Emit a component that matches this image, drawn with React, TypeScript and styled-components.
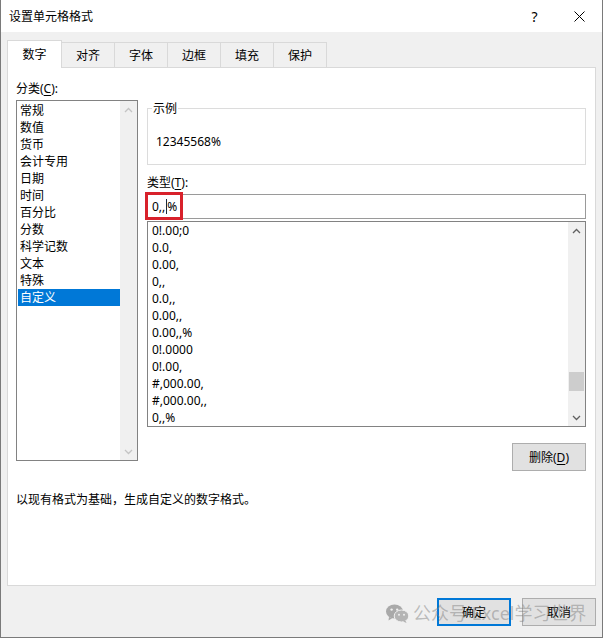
import styled, { createGlobalStyle } from "styled-components";

// 分类 / 类型 列表数据
const categories = ['常规', '数值', '货币', '会计专用', '日期', '时间', '百分比', '分数', '科学记数', '文本', '特殊', '自定义'];
const formats = ['0!.00;0', '0.0,', '0.00,', '0,,', '0.0,,', '0.00,,', '0.00,,%', '0!.0000', '0!.00,', '#,000.00,', '#,000.00,,', '0,,%'];
const tabs = ['数字', '对齐', '字体', '边框', '填充', '保护'];

const GlobalStyle = createGlobalStyle`
    html, body {
        margin: 0;
        padding: 0;
        background: #fff;
    }

    * {
        box-sizing: border-box;
    }
`;

const Chevron = ({ up, color }: { up?: boolean; color: string }) => (
    <svg width="9" height="6" viewBox="0 0 9 6">
        <polyline
            points={up ? '1,5 4.5,1.5 8,5' : '1,1 4.5,4.5 8,1'}
            fill="none"
            stroke={color}
            strokeWidth="1.3"
        />
    </svg>
);

const ScrollBar = ({ disabled, thumbTop, thumbHeight }: { disabled?: boolean; thumbTop?: number; thumbHeight?: number }) => {
    const color = disabled ? '#c4c4c4' : '#606060';
    return (
        <Bar>
            <ArrowBox><Chevron up color={color} /></ArrowBox>
            <Track>
                {thumbHeight ? <Thumb style={{ marginTop: thumbTop, height: thumbHeight }} /> : null}
            </Track>
            <ArrowBox><Chevron color={color} /></ArrowBox>
        </Bar>
    );
};

const WeChatLogo = () => (
    <svg width="23" height="19" viewBox="0 0 23 19">
        <ellipse cx="8.5" cy="7.5" rx="8.5" ry="7" fill="#a9a9a9" />
        <path d="M3 13 L2.5 16.5 L6.5 14 Z" fill="#a9a9a9" />
        <circle cx="5.6" cy="5.6" r="1.2" fill="#f0f0f0" />
        <circle cx="11.2" cy="5.6" r="1.2" fill="#f0f0f0" />
        <ellipse cx="15.5" cy="12" rx="7.3" ry="6" fill="#b4b4b4" stroke="#f0f0f0" strokeWidth="1" />
        <path d="M19.5 16.5 L20.5 19 L17 17.5 Z" fill="#b4b4b4" />
        <circle cx="13" cy="10.8" r="1" fill="#f0f0f0" />
        <circle cx="18" cy="10.8" r="1" fill="#f0f0f0" />
    </svg>
);

const App = () => {
    return (
        <>
            <GlobalStyle />
            <Window>
                <TitleBar>
                    <Title>设置单元格格式</Title>
                    <CaptionButton>?</CaptionButton>
                    <CaptionButton>
                        <svg width="11" height="11" viewBox="0 0 11 11">
                            <path d="M0.5 0.5 L10.5 10.5 M10.5 0.5 L0.5 10.5" stroke="#000" strokeWidth="1" />
                        </svg>
                    </CaptionButton>
                </TitleBar>

                <Body>
                    <TabStrip>
                        {tabs.map((t, i) => (
                            <Tab key={t} $active={i === 0}>{t}</Tab>
                        ))}
                    </TabStrip>

                    <Panel>
                        <Columns>
                            <LeftCol>
                                <FieldLabel>分类(<u>C</u>):</FieldLabel>
                                <CategoryBox>
                                    <Rows $inset={1}>
                                        {categories.map((c, i) => (
                                            <CategoryRow key={c} $selected={i === categories.length - 1}>{c}</CategoryRow>
                                        ))}
                                    </Rows>
                                    <ScrollBar disabled />
                                </CategoryBox>
                            </LeftCol>

                            <RightCol>
                                <SampleGroup>
                                    <legend>示例</legend>
                                    <SampleText>12345568%</SampleText>
                                </SampleGroup>

                                <TypeLabel>类型(<u>T</u>):</TypeLabel>
                                <InputWrap>
                                    <TypeInput>0,,<Caret />%</TypeInput>
                                    <Marker />
                                </InputWrap>

                                <FormatBox>
                                    <Rows $inset={0}>
                                        {formats.map((f) => (
                                            <FormatRow key={f}>{f}</FormatRow>
                                        ))}
                                    </Rows>
                                    <ScrollBar thumbTop={133} thumbHeight={19} />
                                </FormatBox>

                                <DeleteRow>
                                    <Button>删除(<u>D</u>)</Button>
                                </DeleteRow>
                            </RightCol>
                        </Columns>

                        <Hint>以现有格式为基础，生成自定义的数字格式。</Hint>
                    </Panel>

                    <Footer>
                        <OkButton>确定</OkButton>
                        <Button>取消</Button>
                    </Footer>
                </Body>

                <Watermark>
                    <WeChatLogo />
                    <span>公众号·Excel学习世界</span>
                </Watermark>
            </Window>
        </>
    );
};

const Window = styled.div`
    position: relative;
    width: 603px;
    height: 638px;
    display: flex;
    flex-direction: column;
    background: #f0f0f0;
    border: 1px solid #7a7a7a;
    border-top: none;
    overflow: hidden;

    font-family: "Noto Sans", "Noto Sans CJK SC", sans-serif;
    font-size: 12px;
    line-height: 17px;
    color: #000;

    u {
        text-decoration: underline;
        text-underline-offset: 2px;
    }
`;

const TitleBar = styled.div`
    flex: none;
    height: 32px;
    display: flex;
    align-items: center;
    padding-left: 8px;
    background: #fff;
`;

const Title = styled.div`
    flex: 1;
    font-size: 12px;
`;

const CaptionButton = styled.div`
    width: 45px;
    height: 32px;
    display: flex;
    align-items: center;
    justify-content: center;
    font-size: 14px;
    color: #000;
`;

const Body = styled.div`
    flex: 1;
    display: flex;
    flex-direction: column;
    padding: 8px 6px 0 6px;
`;

const TabStrip = styled.div`
    display: flex;
    align-items: flex-end;
    height: 27px;
`;

const Tab = styled.div<{ $active: boolean }>`
    position: relative;
    z-index: ${({ $active }) => ($active ? 2 : 1)};
    width: ${({ $active }) => ($active ? 55 : 54)}px;
    height: ${({ $active }) => ($active ? 28 : 25)}px;
    margin-bottom: ${({ $active }) => ($active ? -1 : 0)}px;
    margin-left: -1px;
    display: flex;
    align-items: center;
    justify-content: center;
    background: ${({ $active }) => ($active ? '#fff' : '#f0f0f0')};
    border: 1px solid #d9d9d9;
    border-bottom: none;

    &:first-child {
        margin-left: 0;
    }
`;

const Panel = styled.div`
    flex: none;
    height: 519px;
    background: #fff;
    border: 1px solid #d9d9d9;
    padding: 12px 7px 0 8px;
`;

const Columns = styled.div`
    display: grid;
    grid-template-columns: 122px 439px;
    column-gap: 9px;
    align-items: start;
`;

const LeftCol = styled.div`
    display: flex;
    flex-direction: column;
`;

const FieldLabel = styled.div`
    height: 17px;
    margin-bottom: 3px;
`;

const ListFrame = styled.div`
    display: flex;
    border: 1px solid #828282;
    background: #fff;
`;

const CategoryBox = styled(ListFrame)`
    height: 361px;
`;

const FormatBox = styled(ListFrame)`
    height: 206px;
    margin-top: 2px;
`;

const Rows = styled.div<{ $inset: number }>`
    flex: 1;
    padding: ${({ $inset }) => $inset}px 0 0 ${({ $inset }) => $inset}px;
`;

const CategoryRow = styled.div<{ $selected: boolean }>`
    height: 17px;
    padding-left: 2px;
    white-space: nowrap;
    background: ${({ $selected }) => ($selected ? '#0078d7' : 'transparent')};
    color: ${({ $selected }) => ($selected ? '#fff' : '#000')};
`;

const FormatRow = styled.div`
    height: 17px;
    padding-left: 4px;
    white-space: nowrap;
`;

const Bar = styled.div`
    width: 17px;
    display: flex;
    flex-direction: column;
    background: #f0f0f0;
`;

const ArrowBox = styled.div`
    height: 17px;
    display: flex;
    align-items: center;
    justify-content: center;
`;

const Track = styled.div`
    flex: 1;
    display: flex;
    flex-direction: column;
`;

const Thumb = styled.div`
    margin: 0 1px;
    background: #cdcdcd;
`;

const RightCol = styled.div`
    display: flex;
    flex-direction: column;
    padding-top: 20px;
`;

const SampleGroup = styled.fieldset`
    margin: 0;
    min-width: 0;
    padding: 16px 0 14px 4px;
    border: 1px solid #dcdcdc;

    legend {
        padding: 0 1px;
        line-height: 17px;
    }
`;

const SampleText = styled.div`
    height: 17px;
    padding-left: 4px;
`;

const TypeLabel = styled.div`
    height: 17px;
    margin-top: 9px;
`;

const InputWrap = styled.div`
    position: relative;
    margin-top: 3px;
`;

const TypeInput = styled.div`
    height: 25px;
    line-height: 23px;
    padding-left: 4px;
    border: 1px solid #9a9a9a;
    background: #fff;
`;

const Caret = styled.span`
    display: inline-block;
    width: 1px;
    height: 15px;
    margin: 0 0.5px;
    vertical-align: -3px;
    background: #1b2a3a;
`;

// 红框标注
const Marker = styled.div`
    position: absolute;
    left: -2px;
    top: -2px;
    width: 38px;
    height: 28px;
    border: 3px solid #d8212b;
`;

const DeleteRow = styled.div`
    display: flex;
    justify-content: flex-end;
    margin-top: 16px;
`;

const Button = styled.div`
    width: 74px;
    height: 28px;
    display: flex;
    align-items: center;
    justify-content: center;
    background: #e1e1e1;
    border: 1px solid #adadad;
`;

const OkButton = styled(Button)`
    border: 2px solid #0078d7;
`;

const Hint = styled.div`
    margin-top: 20px;
`;

const Footer = styled.div`
    flex: 1;
    display: flex;
    justify-content: flex-end;
    align-items: flex-start;
    gap: 11px;
    padding-top: 12px;
`;

// 底部半透明水印，盖在按钮之上
const Watermark = styled.div`
    position: absolute;
    left: 385px;
    top: 602px;
    z-index: 5;
    display: flex;
    align-items: center;
    gap: 4px;
    pointer-events: none;
    font-size: 18px;
    line-height: 22px;
    color: rgba(120, 120, 120, 0.45);
`;

export default App;
